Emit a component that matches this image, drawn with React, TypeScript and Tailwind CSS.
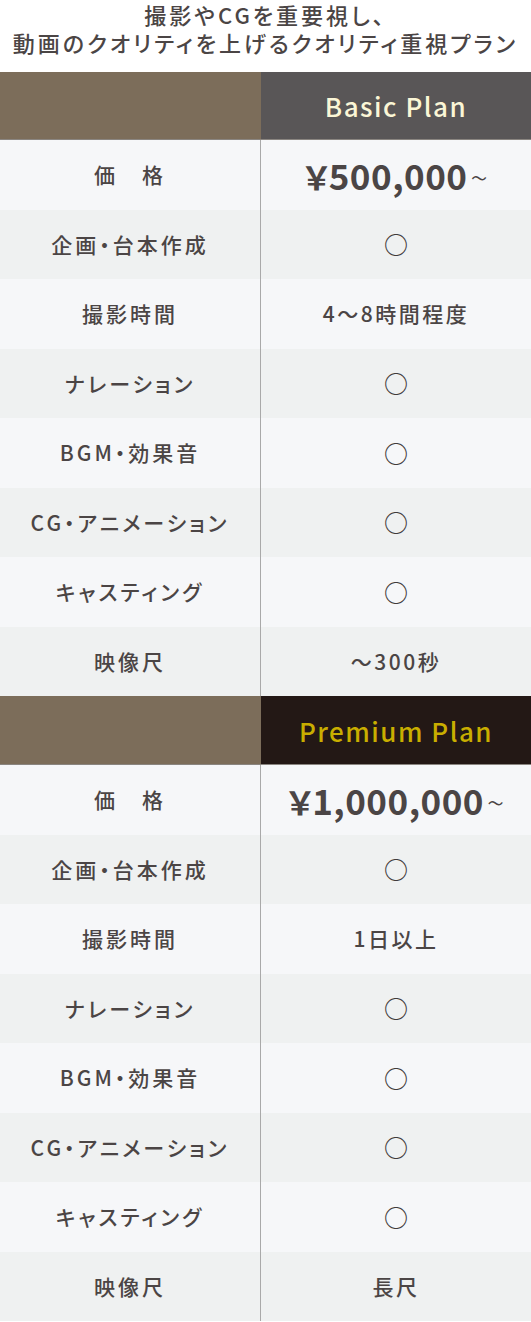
const font = {
  fontFamily: '"Noto Sans CJK JP", "Noto Sans", sans-serif',
  fontFeatureSettings: '"palt"',
};

type Row = { label: string; value: string; kind?: "price" | "mark" | "text" };

const basicRows: Row[] = [
  { label: "価　格", value: "500,000", kind: "price" },
  { label: "企画・台本作成", value: "○", kind: "mark" },
  { label: "撮影時間", value: "4〜8時間程度" },
  { label: "ナレーション", value: "○", kind: "mark" },
  { label: "BGM・効果音", value: "○", kind: "mark" },
  { label: "CG・アニメーション", value: "○", kind: "mark" },
  { label: "キャスティング", value: "○", kind: "mark" },
  { label: "映像尺", value: "〜300秒" },
];

const premiumRows: Row[] = [
  { label: "価　格", value: "1,000,000", kind: "price" },
  { label: "企画・台本作成", value: "○", kind: "mark" },
  { label: "撮影時間", value: "1日以上" },
  { label: "ナレーション", value: "○", kind: "mark" },
  { label: "BGM・効果音", value: "○", kind: "mark" },
  { label: "CG・アニメーション", value: "○", kind: "mark" },
  { label: "キャスティング", value: "○", kind: "mark" },
  { label: "映像尺", value: "長尺" },
];

function Value({ row }: { row: Row }) {
  if (row.kind === "price") {
    return (
      <span className="flex items-baseline">
        <span className="text-[32px] font-bold">￥</span>
        <span className="text-[35px] font-bold tracking-[0.5px]">{row.value}</span>
        <span className="text-[32px] font-light ml-[3px]">~</span>
      </span>
    );
  }
  if (row.kind === "mark") {
    return <span className="text-[24px] font-medium text-[#3f3a3a]">○</span>;
  }
  return <span className="text-[21px] font-medium tracking-[2.5px]">{row.value}</span>;
}

function PlanTable({
  title,
  headH,
  headBg,
  titleColor,
  rows,
}: {
  title: string;
  headH: string;
  headBg: string;
  titleColor: string;
  rows: Row[];
}) {
  return (
    <div>
      <div className={`flex ${headH} border-b border-[#8a8580]`}>
        <div className="w-[261px] bg-[#7c6d5a]" />
        <div className={`flex-1 flex items-center justify-center ${headBg}`}>
          <span className={`text-[26px] font-medium tracking-[1.5px] ${titleColor}`}>{title}</span>
        </div>
      </div>
      {rows.map((r, i) => (
        <div
          key={i}
          className={`flex h-[69.5px] text-[#4b4545] ${i % 2 === 0 ? "bg-[#f6f7f9]" : "bg-[#eff1f1]"}`}
        >
          <div className="w-[261px] flex items-center justify-center border-r border-[#a9a9a9]">
            <span className="text-[21px] font-medium tracking-[3px]">{r.label}</span>
          </div>
          <div className="flex-1 flex items-center justify-center">
            <Value row={r} />
          </div>
        </div>
      ))}
    </div>
  );
}

export default function App() {
  return (
    <main className="w-[531px] bg-white" style={font}>
      <div className="h-[72px] flex flex-col items-center text-[22px] leading-[28px] font-medium tracking-[3px] text-[#4b4545]">
        <p>撮影やCGを重要視し、</p>
        <p>動画のクオリティを上げるクオリティ重視プラン</p>
      </div>
      <PlanTable title="Basic Plan" headH="h-[68px]" headBg="bg-[#595657]" titleColor="text-[#fbf6d6]" rows={basicRows} />
      <PlanTable title="Premium Plan" headH="h-[69px]" headBg="bg-[#231815]" titleColor="text-[#c9ae00]" rows={premiumRows} />
    </main>
  );
}
